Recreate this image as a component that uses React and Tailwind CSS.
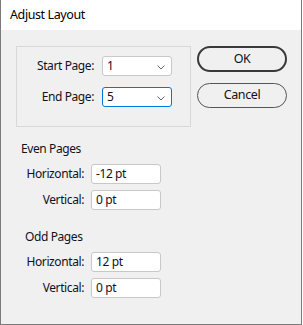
import React from "react";

function Chevron() {
  return (
    <svg width="8" height="5" viewBox="0 0 8 5" className="absolute right-[6px] top-[8px]">
      <path d="M0.5 0.5 L4 4 L7.5 0.5" fill="none" stroke="#666" strokeWidth="1" />
    </svg>
  );
}

function Select({ value, active }) {
  return (
    <div
      className={
        "relative w-[70px] h-[20px] bg-white rounded-[3px] border pl-[4px] leading-[18px] " +
        (active ? "border-[#0078d7]" : "border-[#c8c8c8]")
      }
    >
      {value}
      <Chevron />
    </div>
  );
}

function Field({ label, value, className }) {
  return (
    <div className={"flex items-center " + (className || "")}>
      <div className="w-[84px] text-right pr-[1px]">{label}</div>
      <div className="ml-[6px] w-[70px] h-[20px] bg-white rounded-[3px] border border-[#c8c8c8] pl-[4px] leading-[18px]">
        {value}
      </div>
    </div>
  );
}

export default function App() {
  return (
    <div
      className="w-[302px] h-[325px] bg-[#f0f0f0] border-l border-r border-b border-[#7a7a7a] text-[12px] tracking-[-0.4px] text-[#111122]"
      style={{ fontFamily: '"Noto Sans", "Open Sans", sans-serif' }}
    >
      <div className="h-[30px] bg-white pl-[9px] pt-[7px] leading-[16px] text-[12.5px] text-black">
        Adjust Layout
      </div>

      <div className="flex pt-[16px] pl-[15px]">
        <div className="w-[175px] h-[81px] border border-[#d8d8d8] pt-[9px]">
          <div className="flex items-center">
            <div className="w-[77px] text-right">Start Page:</div>
            <div className="ml-[8px]">
              <Select value="1" />
            </div>
          </div>
          <div className="flex items-center mt-[11px]">
            <div className="w-[77px] text-right">End Page:</div>
            <div className="ml-[8px]">
              <Select value="5" active />
            </div>
          </div>
        </div>
        <div className="ml-[6px] flex flex-col">
          <div className="w-[90px] h-[26px] rounded-full border-2 border-[#3a3a3a] bg-[#f0f0f0] flex items-center justify-center text-[12.5px]">
            OK
          </div>
          <div className="mt-[11px] w-[90px] h-[25px] rounded-full border border-[#555] bg-[#f0f0f0] flex items-center justify-center text-[12.5px]">
            Cancel
          </div>
        </div>
      </div>

      <div className="pl-[20px] mt-[14px] leading-[16px]">Even Pages</div>
      <Field label="Horizontal:" value="-12 pt" className="mt-[7px]" />
      <Field label="Vertical:" value="0 pt" className="mt-[6px]" />

      <div className="pl-[24px] mt-[19px] leading-[16px]">Odd Pages</div>
      <Field label="Horizontal:" value="12 pt" className="mt-[7px]" />
      <Field label="Vertical:" value="0 pt" className="mt-[6px]" />
    </div>
  );
}
